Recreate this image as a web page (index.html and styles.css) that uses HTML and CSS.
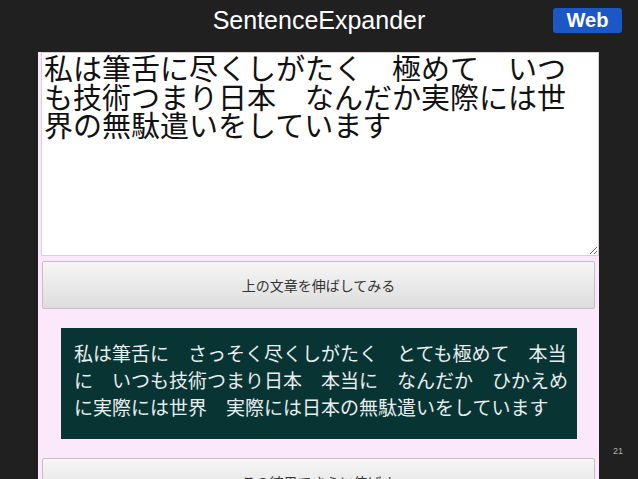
FILE: index.html
```html
<!DOCTYPE html>
<html lang="ja">
<head>
<meta charset="utf-8">
<title>SentenceExpander</title>
<link rel="stylesheet" href="styles.css">
</head>
<body>
<header class="header">
  <div class="title">SentenceExpander</div>
  <div class="badge">Web</div>
</header>
<main class="panel">
  <textarea class="input">私は筆舌に尽くしがたく　極めて　いつも技術つまり日本　なんだか実際には世界の無駄遣いをしています</textarea>
  <button class="btn">上の文章を伸ばしてみる</button>
  <div class="result">私は筆舌に　さっそく尽くしがたく　とても極めて　本当<br>に　いつも技術つまり日本　本当に　なんだか　ひかえめ<br>に実際には世界　実際には日本の無駄遣いをしています</div>
  <button class="btn btn-next">この結果でさらに伸ばす</button>
</main>
<div class="page-num">21</div>
</body>
</html>
```
FILE: styles.css
```css
html, body {
  margin: 0;
  padding: 0;
}
body {
  width: 638px;
  height: 479px;
  overflow: hidden;
  position: relative;
  background: #202020;
  font-family: "Liberation Sans", "Noto Sans CJK JP", sans-serif;
}
.header {
  height: 52px;
  box-sizing: border-box;
  padding-top: 6px;
  display: grid;
  grid-template-columns: 1fr auto 1fr;
  align-items: start;
}
.title {
  grid-column: 2;
  color: #ffffff;
  font-size: 25px;
  line-height: 28px;
}
.badge {
  grid-column: 3;
  justify-self: end;
  margin: 2px 16px 0 0;
  width: 69px;
  height: 25px;
  background: #1b58c6;
  border-radius: 3px;
  color: #ffffff;
  font-weight: bold;
  font-size: 20px;
  line-height: 25px;
  text-align: center;
}
.panel {
  margin-left: 38px;
  width: 561px;
  height: 427px;
  background: #fbe9fb;
  overflow: hidden;
}
.input {
  display: block;
  margin: 0 0 0 3px;
  width: 558px;
  height: 204px;
  box-sizing: border-box;
  border: 1px solid #d9cfd9;
  padding: 0 20px 0 2px;
  font-family: "Noto Sans CJK JP", sans-serif;
  font-size: 29px;
  line-height: 28.5px;
  color: #111111;
  background: #ffffff;
  outline: none;
  overflow: hidden;
}
.btn {
  display: block;
  margin: 5px 0 0 4px;
  width: 553px;
  height: 48px;
  box-sizing: border-box;
  border: 1px solid #c6bec6;
  border-radius: 2px;
  background: linear-gradient(#f6f6f6, #dddddd);
  font-family: "Noto Sans CJK JP", sans-serif;
  font-size: 14px;
  color: #333333;
  padding: 0;
}
.result {
  margin: 19px 0 0 23px;
  width: 516px;
  height: 111px;
  box-sizing: border-box;
  padding: 11px 0 0 13px;
  background: #093434;
  color: #e8eeee;
  font-family: "Noto Sans CJK JP", sans-serif;
  font-size: 19px;
  line-height: 27px;
  white-space: nowrap;
}
.btn-next {
  margin-top: 19px;
}
.page-num {
  position: absolute;
  left: 613px;
  top: 446px;
  font-size: 9px;
  color: #b0b0b0;
}
```
